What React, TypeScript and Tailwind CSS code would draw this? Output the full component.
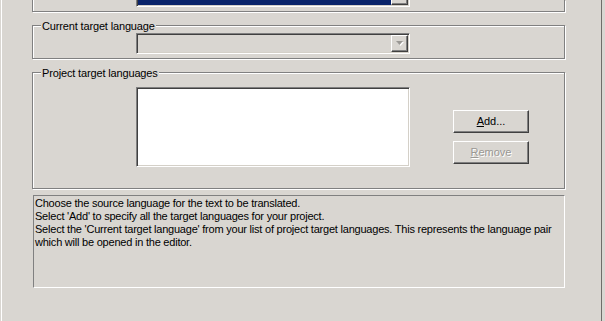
import React from 'react';

const frame = 'relative border border-[#808080] shadow-[inset_1px_1px_0_#fff,1px_1px_0_#fff]';
const sunken =
  'border border-t-[#808080] border-l-[#808080] border-b-white border-r-white shadow-[inset_1px_1px_0_#404040,inset_-1px_-1px_0_#d4d0c8]';
const raised =
  'border border-t-white border-l-white border-b-[#404040] border-r-[#404040] shadow-[inset_-1px_-1px_0_#808080]';

function GroupLabel({ text }: { text: string }) {
  return (
    <span className="absolute left-[8px] top-[-6px] bg-[#d9d6d1] px-[1px] text-[11px] leading-[13px] tracking-[-0.15px] text-black">
      {text}
    </span>
  );
}

function Arrow({ disabled }: { disabled?: boolean }) {
  return (
    <svg width="7" height="5" viewBox="0 0 7 5" className={disabled ? 'drop-shadow-[1px_1px_0_#fff]' : ''}>
      <path d="M0 0h7L3.5 4z" fill={disabled ? '#9a9894' : '#000'} />
    </svg>
  );
}

function ComboBox({ selected, disabled }: { selected?: boolean; disabled?: boolean }) {
  return (
    <div className={`${sunken} flex h-[21px] w-[274px] p-[1px] ${disabled ? 'bg-[#d9d6d1]' : 'bg-white'}`}>
      <div className={`flex-1 ${selected ? 'bg-[#0a246a]' : ''}`} />
      <div className={`${raised} flex w-[17px] items-center justify-center bg-[#d9d6d1]`}>
        <Arrow disabled={disabled} />
      </div>
    </div>
  );
}

function Button({ children, disabled }: { children: React.ReactNode; disabled?: boolean }) {
  return (
    <button
      disabled={disabled}
      className={`${raised} flex h-[23px] w-[76px] items-center justify-center bg-[#d9d6d1] text-[11px] ${
        disabled ? 'text-[#9a9894] [text-shadow:1px_1px_0_#fff]' : 'text-black'
      }`}
    >
      {children}
    </button>
  );
}

export default function App() {
  return (
    <div className="h-[321px] w-[605px] overflow-hidden bg-[#d9d6d1] pl-px pr-[3px] font-['Liberation_Sans',Arial,sans-serif]">
      <div className="flex h-full flex-col border-l border-r border-l-white border-r-[#6f6d69] pl-[30px]">
        {/* tail of the source language group */}
        <div className="flex h-[12px] w-[533px] shrink-0 items-start border-x border-b border-[#808080] pl-[103px] shadow-[inset_1px_0_0_#fff,1px_1px_0_#fff]">
          <div className="-mt-[14px]">
            <ComboBox selected />
          </div>
        </div>

        <div className={`${frame} mt-[13px] h-[34px] w-[533px] shrink-0 pl-[103px] pt-[7px]`}>
          <GroupLabel text="Current target language" />
          <ComboBox disabled />
        </div>

        <div className={`${frame} mt-[13px] flex h-[117px] w-[533px] shrink-0 pl-[103px] pt-[14px]`}>
          <GroupLabel text="Project target languages" />
          <div className={`${sunken} h-[80px] w-[274px] bg-white`} />
          <div className="ml-[43px] mt-[23px] flex flex-col gap-[8px]">
            <Button>
              <span className="underline">A</span>dd...
            </Button>
            <Button disabled>
              <span className="underline">R</span>emove
            </Button>
          </div>
        </div>

        <div className="ml-px mt-[6px] h-[93px] w-[532px] shrink-0 border border-t-[#808080] border-l-[#808080] border-b-white border-r-white pl-px pt-px text-[11px] leading-[13px] tracking-[-0.22px] text-black">
          <p>Choose the source language for the text to be translated.</p>
          <p>Select 'Add' to specify all the target languages for your project.</p>
          <p>
            Select the 'Current target language' from your list of project target languages. This represents the language pair
            which will be opened in the editor.
          </p>
        </div>
      </div>
    </div>
  );
}
